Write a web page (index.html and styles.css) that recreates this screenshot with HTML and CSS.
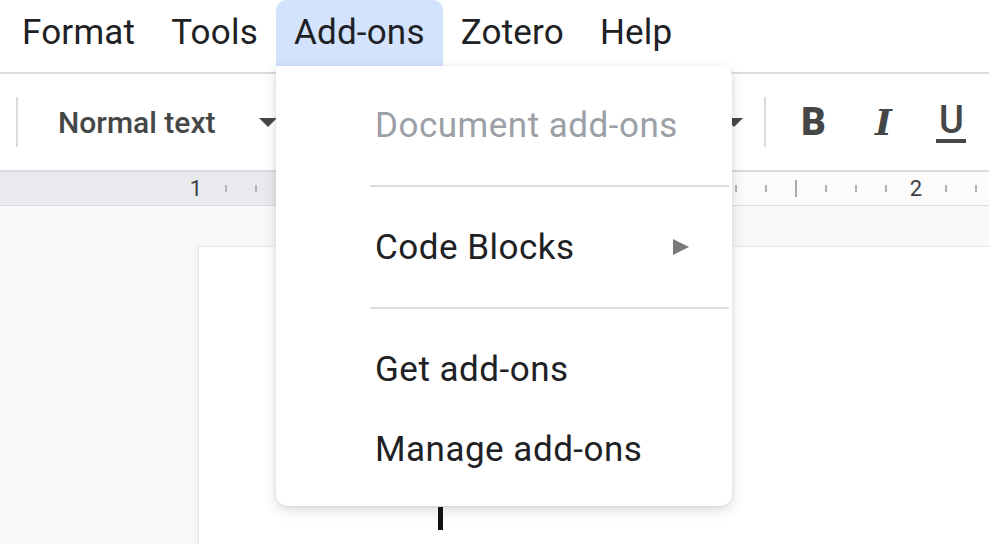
FILE: index.html
```html
<!DOCTYPE html>
<html lang="en">
	<head>
		<meta charset="UTF-8" />
		<title>Docs - Add-ons menu</title>
		<link rel="stylesheet" href="styles.css">
	</head>
	<body>
		<div class="menubar">
			<div class="menu-item">Format</div>
			<div class="menu-item">Tools</div>
			<div class="menu-item active">Add-ons</div>
			<div class="menu-item">Zotero</div>
			<div class="menu-item">Help</div>
		</div>

		<div class="toolbar">
			<div class="divider"></div>
			<div class="style-select">Normal text</div>
			<div class="caret"></div>
			<div class="spacer"></div>
			<div class="caret"></div>
			<div class="divider divider-right"></div>
			<div class="tool tool-bold">B</div>
			<div class="tool tool-italic">I</div>
			<div class="tool tool-underline">U</div>
		</div>

		<div class="ruler" id="ruler"></div>

		<div class="doc-area">
			<div class="page">
				<div class="cursor"></div>
			</div>
		</div>

		<div class="dropdown">
			<div class="dropdown-item disabled">Document add-ons</div>
			<div class="separator"></div>
			<div class="dropdown-item">
				Code Blocks
				<svg class="submenu-arrow" width="18" height="18" viewBox="0 0 18 18">
					<polygon points="1,1 17,9 1,17" fill="#7a7a7a" />
				</svg>
			</div>
			<div class="separator"></div>
			<div class="dropdown-item">Get add-ons</div>
			<div class="dropdown-item">Manage add-ons</div>
		</div>

		<script>
			var ruler = document.getElementById('ruler');
			// 30px cells, starting with the "1" mark
			for (var i = 0; i < 27; i++) {
				var cell = document.createElement('span');
				cell.className = 'ruler-cell';
				if (i === 0 || i === 24) {
					cell.textContent = i === 0 ? '1' : '2';
					cell.className += ' ruler-num';
				} else {
					var tick = document.createElement('i');
					tick.className = i === 20 ? 'tick tick-tall' : 'tick';
					cell.appendChild(tick);
				}
				ruler.appendChild(cell);
			}
		</script>
	</body>
</html>
```

FILE: styles.css
```css
body {
	margin: 0;
	width: 989px;
	height: 544px;
	overflow: hidden;
	font-family: 'Roboto', 'Liberation Sans', sans-serif;
	color: #202124;
	background-color: #fff;
	position: relative;
}

.menubar {
	display: flex;
	height: 72px;
	padding-left: 4px;
	border-bottom: 2px solid #dadce0;
}

.menu-item {
	height: 66px;
	line-height: 66px;
	padding: 0 18px;
	font-size: 35px;
	letter-spacing: 0.2px;
	color: #202124;
}

.menu-item.active {
	background-color: #d3e3fd;
	border-radius: 10px 10px 0 0;
}

.toolbar {
	display: flex;
	align-items: center;
	height: 96px;
	padding-left: 16px;
}

.divider {
	width: 2px;
	height: 50px;
	background-color: #dadce0;
}

.style-select {
	margin-left: 40px;
	font-size: 30px;
	font-weight: 500;
	color: #444746;
}

.caret {
	width: 0;
	height: 0;
	margin-left: 44px;
	border-left: 9px solid transparent;
	border-right: 9px solid transparent;
	border-top: 9px solid #444746;
}

.spacer {
	width: 404px;
}

.divider-right {
	margin-left: 21px;
}

.tool {
	margin-left: 28px;
	text-align: center;
	font-size: 38px;
	color: #444746;
}

.tool-bold {
	width: 30px;
	margin-left: 32px;
	font-weight: 900;
}

.tool-italic {
	width: 34px;
	margin-left: 38px;
	font-family: 'DejaVu Serif', serif;
	font-style: italic;
	font-weight: bold;
	font-size: 36px;
}

.tool-underline {
	width: 30px;
	margin-left: 36px;
	font-weight: 500;
	line-height: 38px;
	border-bottom: 4px solid #444746;
}

.ruler {
	display: flex;
	align-items: center;
	height: 33px;
	padding-left: 181px;
	border-top: 2px solid #dadce0;
	border-bottom: 1px solid #dadce0;
	background: linear-gradient(to right, #e8eaed 0, #e8eaed 300px, #fbfbfb 300px);
}

.ruler-cell {
	flex: none;
	width: 30px;
	display: flex;
	justify-content: center;
	align-items: center;
}

.ruler-num {
	font-size: 22px;
	color: #3c4043;
}

.tick {
	display: block;
	width: 2px;
	height: 7px;
	background-color: #b0b3b8;
}

.tick-tall {
	height: 17px;
	background-color: #a8abb0;
}

.doc-area {
	height: 298px;
	padding-top: 40px;
	padding-left: 198px;
	background-color: #f8f9fa;
}

.page {
	height: 100%;
	box-sizing: border-box;
	background-color: #fff;
	border-left: 1px solid #e3e5e8;
	border-top: 1px solid #e8eaed;
	padding-top: 260px;
	padding-left: 239px;
	box-shadow: -2px 0 4px rgba(60, 64, 67, 0.06);
}

.cursor {
	width: 5px;
	height: 23px;
	background-color: #111;
}

.dropdown {
	position: absolute;
	left: 276px;
	top: 66px;
	width: 456px;
	height: 440px;
	box-sizing: border-box;
	padding: 19px 0 17px 0;
	background-color: #fff;
	border-radius: 0 10px 12px 12px;
	box-shadow: 0 4px 14px rgba(60, 64, 67, 0.18), 0 1px 3px rgba(60, 64, 67, 0.1);
}

.dropdown-item {
	display: flex;
	align-items: center;
	height: 80px;
	padding-left: 99px;
	padding-right: 42px;
	font-size: 35px;
	letter-spacing: 0.5px;
	color: #202124;
}

.dropdown-item.disabled {
	color: #9aa0a6;
}

.submenu-arrow {
	margin-left: auto;
}

.separator {
	height: 2px;
	margin: 20px 3px 20px 94px;
	background-color: #dadce0;
}
```
